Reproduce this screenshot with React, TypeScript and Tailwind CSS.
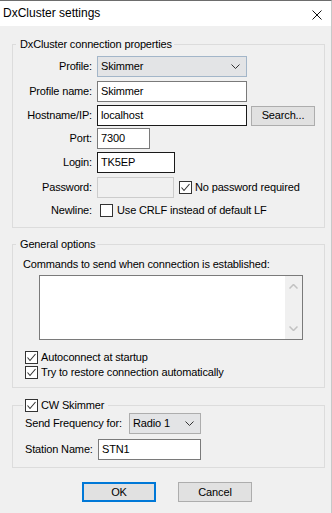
import React from "react";

function Check({ checked }: { checked?: boolean }) {
  return (
    <div className="w-[13px] h-[13px] border border-[#333333] bg-white flex items-center justify-center shrink-0">
      {checked && (
        <svg width="11" height="11" viewBox="0 0 11 11">
          <path d="M1.5 5.5 L4 8.5 L9.5 2" fill="none" stroke="#333333" strokeWidth="1.1" />
        </svg>
      )}
    </div>
  );
}

function Chevron({ color = "#333333" }: { color?: string }) {
  return (
    <svg width="9" height="5" viewBox="0 0 9 5">
      <path d="M0.5 0.5 L4.5 4.5 L8.5 0.5" fill="none" stroke={color} strokeWidth="1" />
    </svg>
  );
}

function Select({ value, width, border }: { value: string; width: string; border: string }) {
  return (
    <div className={`${width} ${border} h-[21px] border bg-[#e3e4e6] flex items-center justify-between pl-[3px] pr-[6px]`}>
      <span>{value}</span>
      <Chevron />
    </div>
  );
}

function Field({ value, width, dark }: { value: string; width: string; dark?: boolean }) {
  return (
    <div
      className={`${width} h-[21px] border bg-white flex items-center pl-[3px] ${
        dark ? "border-[#1a1a1a]" : "border-[#7a7a7a]"
      }`}
    >
      {value}
    </div>
  );
}

function Row({ label, children, top }: { label: string; children: React.ReactNode; top: string }) {
  return (
    <div className={`flex items-center ${top}`}>
      <div className="w-[80px] text-right pr-[1px] whitespace-nowrap">{label}</div>
      <div className="ml-[4px] flex items-center">{children}</div>
    </div>
  );
}

export default function App() {
  return (
    <div className="w-[332px] h-[513px] bg-[#f0f0f0] border-t border-r border-t-[#6d6d6d] border-r-[#c8c8c8] overflow-hidden text-[11px] leading-[13px] tracking-[-0.15px] text-black font-['Liberation_Sans',Arial,sans-serif]">
      {/* Title bar */}
      <div className="h-[25px] bg-white flex items-center justify-between pl-[3px] pr-[9px]">
        <span className="text-[12px] tracking-normal">DxCluster settings</span>
        <svg width="10" height="10" viewBox="0 0 10 10" className="mt-[2px]">
          <path d="M0.5 0.5 L9.5 9.5 M9.5 0.5 L0.5 9.5" stroke="#111111" strokeWidth="1" />
        </svg>
      </div>

      {/* Connection properties */}
      <fieldset className="ml-[12px] mt-[12px] w-[313px] border border-[#dcdcdc] p-0 m-0 pb-[6px]">
        <legend className="ml-[3px] pl-[4px] pr-[2px] leading-[13px]">DxCluster connection properties</legend>
        <Row label="Profile:" top="mt-[5px]">
          <Select value="Skimmer" width="w-[150px]" border="border-[#a3b6c9]" />
        </Row>
        <Row label="Profile name:" top="mt-[4px]">
          <Field value="Skimmer" width="w-[150px]" />
        </Row>
        <Row label="Hostname/IP:" top="mt-[3px]">
          <Field value="localhost" width="w-[150px]" dark />
          <div className="ml-[4px] w-[64px] h-[20px] border border-[#adadad] bg-[#e1e1e1] flex items-center justify-center">
            Search...
          </div>
        </Row>
        <Row label="Port:" top="mt-[2px]">
          <Field value="7300" width="w-[53px]" />
        </Row>
        <Row label="Login:" top="mt-[3px]">
          <Field value="TK5EP" width="w-[78px]" dark />
        </Row>
        <Row label="Password:" top="mt-[4px]">
          <div className="w-[77px] h-[21px] border border-[#cccccc] bg-[#f0f0f0]" />
          <div className="ml-[5px] flex items-center gap-[3px]">
            <Check checked />
            <span>No password required</span>
          </div>
        </Row>
        <Row label="Newline:" top="mt-[2px] h-[21px]">
          <div className="ml-[3px] flex items-center gap-[4px]">
            <Check />
            <span>Use CRLF instead of default LF</span>
          </div>
        </Row>
      </fieldset>

      {/* General options */}
      <fieldset className="ml-[12px] mt-[10px] w-[313px] border border-[#dcdcdc] p-0 m-0 pb-[7px]">
        <legend className="ml-[3px] pl-[4px] pr-[2px] leading-[13px]">General options</legend>
        <div className="mt-[7px] pl-[10px]">Commands to send when connection is established:</div>
        <div className="ml-[26px] mt-[4px] w-[264px] h-[65px] border border-[#7a7a7a] bg-white flex justify-end">
          <div className="w-[17px] h-full bg-[#f0f0f0] flex flex-col items-center justify-between py-[8px]">
            <svg width="9" height="5" viewBox="0 0 9 5">
              <path d="M0.5 4.5 L4.5 0.5 L8.5 4.5" fill="none" stroke="#c2c2c2" strokeWidth="1.5" />
            </svg>
            <svg width="9" height="5" viewBox="0 0 9 5">
              <path d="M0.5 0.5 L4.5 4.5 L8.5 0.5" fill="none" stroke="#c2c2c2" strokeWidth="1.5" />
            </svg>
          </div>
        </div>
        <div className="mt-[10px] pl-[12px] h-[15px] flex items-center gap-[3px]">
          <Check checked />
          <span>Autoconnect at startup</span>
        </div>
        <div className="pl-[12px] h-[15px] flex items-center gap-[3px]">
          <Check checked />
          <span>Try to restore connection automatically</span>
        </div>
      </fieldset>

      {/* CW Skimmer */}
      <fieldset className="ml-[12px] mt-[10px] w-[313px] border border-[#dcdcdc] p-0 m-0 pb-[7px]">
        <legend className="ml-[10px] pl-[2px] pr-[4px] h-[15px] flex items-center gap-[3px]">
          <Check checked />
          <span>CW Skimmer</span>
        </legend>
        <div className="flex items-center pl-[12px]">
          <span className="w-[104px] whitespace-nowrap">Send Frequency for:</span>
          <Select value="Radio 1" width="w-[72px]" border="border-[#adadad]" />
        </div>
        <div className="mt-[5px] flex items-center pl-[12px]">
          <span className="w-[73px] whitespace-nowrap">Station Name:</span>
          <Field value="STN1" width="w-[103px]" />
        </div>
      </fieldset>

      {/* Buttons */}
      <div className="mt-[14px] flex pl-[82px] gap-[22px]">
        <div className="w-[74px] h-[20px] border-2 border-[#0078d7] bg-[#e1e1e1] flex items-center justify-center">
          OK
        </div>
        <div className="w-[74px] h-[20px] border border-[#adadad] bg-[#e1e1e1] flex items-center justify-center">
          Cancel
        </div>
      </div>
    </div>
  );
}
